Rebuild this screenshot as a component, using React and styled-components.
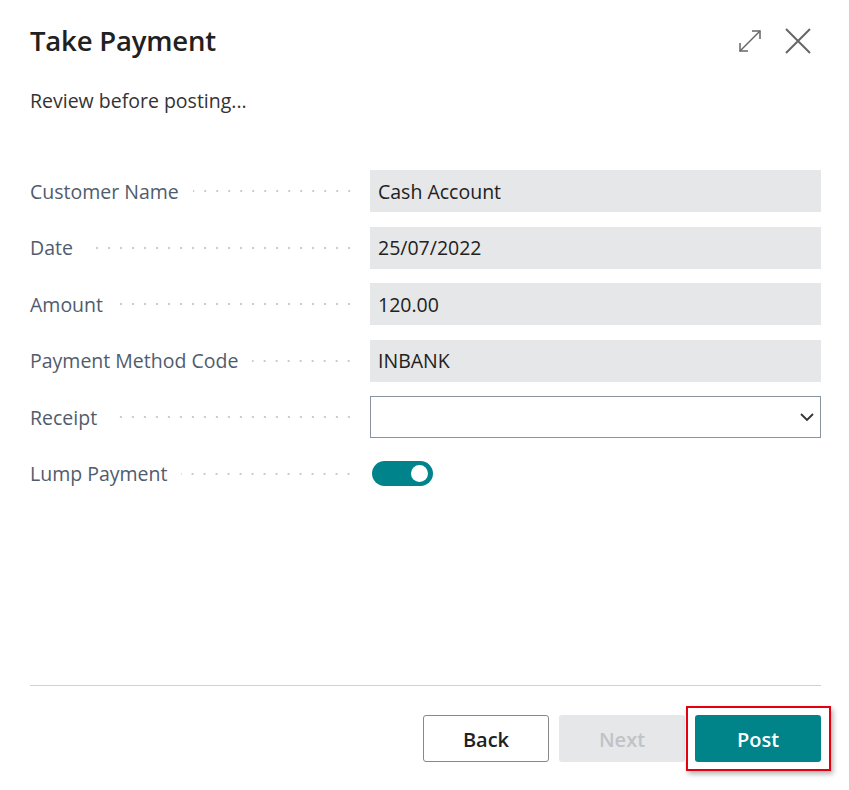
import React from 'react'
import styled, { createGlobalStyle } from 'styled-components'

const GlobalStyle = createGlobalStyle`
  html, body {
    margin: 0;
    padding: 0;
    background: #fff;
  }
  body {
    font-family: 'Segoe UI', 'Open Sans', 'Noto Sans', sans-serif;
    color: #212121;
  }
`;

const Dialog = styled.div`
  width: 849px;
  height: 790px;
  box-sizing: border-box;
  padding: 22px 28px 28px 30px;
  display: flex;
  flex-direction: column;
`;

const Header = styled.div`
  display: flex;
  align-items: center;
  justify-content: space-between;
`;

const Title = styled.h1`
  margin: 0;
  font-size: 27.5px;
  font-weight: 600;
  letter-spacing: -0.2px;
  color: #212121;
`;

const HeaderActions = styled.div`
  display: flex;
  align-items: center;
  gap: 22px;
  margin-right: 10px;
`;

const IconButton = styled.button`
  border: 0;
  background: none;
  padding: 0;
  display: flex;
  cursor: pointer;
`;

const Subtitle = styled.p`
  margin: 28px 0 0;
  font-size: 19.5px;
  color: #333;
`;

const Form = styled.div`
  margin-top: 56px;
  display: grid;
  grid-template-columns: 325px 1fr;
  column-gap: 15px;
  row-gap: 14.6px;
  flex: 1;
  align-content: start;
`;

const LabelCell = styled.div`
  display: flex;
  align-items: center;
  height: 42px;
  gap: 14px;
`;

const Label = styled.span`
  font-size: 19.5px;
  color: #505c6d;
  white-space: nowrap;
`;

const Leader = styled.span`
  flex: 1;
  height: 4px;
  background-image: radial-gradient(circle, #c9cccf 1px, transparent 1.4px);
  background-size: 12px 4px;
  background-repeat: repeat-x;
  background-position: right center;
`;

const Field = styled.div`
  height: 42px;
  box-sizing: border-box;
  display: flex;
  align-items: center;
  padding: 0 8px;
  font-size: 19.5px;
  color: #212121;
  background: ${p => (p.$select ? '#fff' : '#e6e7e8')};
  border: ${p => (p.$select ? '1px solid #8a949f' : '0')};
  justify-content: ${p => (p.$select ? 'flex-end' : 'flex-start')};
  padding-right: ${p => (p.$select ? '6px' : '8px')};
`;

const ToggleCell = styled.div`
  height: 42px;
  display: flex;
  align-items: center;
  padding-left: 2px;
`;

const Toggle = styled.div`
  width: 61px;
  height: 25px;
  border-radius: 13px;
  background: #00838a;
  position: relative;
  &::after {
    content: '';
    position: absolute;
    right: 5px;
    top: 4px;
    width: 17px;
    height: 17px;
    border-radius: 50%;
    background: #fff;
  }
`;

const Divider = styled.hr`
  margin: 0;
  border: 0;
  border-top: 1px solid #d1d1d1;
`;

const Footer = styled.div`
  margin-top: 29px;
  display: flex;
  justify-content: flex-end;
  gap: 10px;
`;

const Button = styled.button`
  width: 126px;
  height: 47px;
  border-radius: 3px;
  font-family: inherit;
  font-size: 20px;
  font-weight: 600;
  padding: 2px 0 0;
  position: relative;
  border: 1px solid ${p => (p.$variant === 'default' ? '#8a8886' : 'transparent')};
  background: ${p =>
    p.$variant === 'primary' ? '#008489' : p.$variant === 'disabled' ? '#e6e7e9' : '#fff'};
  color: ${p =>
    p.$variant === 'primary' ? '#fff' : p.$variant === 'disabled' ? '#bfc3c8' : '#212121'};
`;

const Highlight = styled.span`
  position: absolute;
  left: -10px;
  top: -10px;
  right: -11px;
  bottom: -10px;
  border: 2px solid #e3000f;
  box-shadow: 2px 3px 5px rgba(0, 0, 0, 0.3);
  pointer-events: none;
`;

const ExpandIcon = () => (
  <svg width="26" height="26" viewBox="0 0 26 26" fill="none" stroke="#666" strokeWidth="1.5">
    <path d="M3 23 L23 3" />
    <path d="M15 3 H23 V11" />
    <path d="M3 15 V23 H11" />
  </svg>
);

const CloseIcon = () => (
  <svg width="26" height="26" viewBox="0 0 26 26" fill="none" stroke="#666" strokeWidth="2">
    <path d="M1 1 L25 25 M25 1 L1 25" />
  </svg>
);

const Chevron = () => (
  <svg width="14" height="9" viewBox="0 0 14 9" fill="none" stroke="#333" strokeWidth="1.8">
    <path d="M1 1 L7 7 L13 1" />
  </svg>
);

const rows = [
  { label: 'Customer Name', value: 'Cash Account' },
  { label: 'Date', value: '25/07/2022' },
  { label: 'Amount', value: '120.00' },
  { label: 'Payment Method Code', value: 'INBANK' },
];

export default function App() {
  return (
    <>
      <GlobalStyle />
      <Dialog>
        <Header>
          <Title>Take Payment</Title>
          <HeaderActions>
            <IconButton aria-label="Expand"><ExpandIcon /></IconButton>
            <IconButton aria-label="Close"><CloseIcon /></IconButton>
          </HeaderActions>
        </Header>
        <Subtitle>Review before posting...</Subtitle>
        <Form>
          {rows.map(r => (
            <React.Fragment key={r.label}>
              <LabelCell>
                <Label>{r.label}</Label>
                <Leader />
              </LabelCell>
              <Field>{r.value}</Field>
            </React.Fragment>
          ))}
          <LabelCell>
            <Label>Receipt</Label>
            <Leader />
          </LabelCell>
          <Field $select><Chevron /></Field>
          <LabelCell>
            <Label>Lump Payment</Label>
            <Leader />
          </LabelCell>
          <ToggleCell><Toggle /></ToggleCell>
        </Form>
        <Divider />
        <Footer>
          <Button $variant="default">Back</Button>
          <Button $variant="disabled">Next</Button>
          <Button $variant="primary">
            Post
            <Highlight />
          </Button>
        </Footer>
      </Dialog>
    </>
  )
}
